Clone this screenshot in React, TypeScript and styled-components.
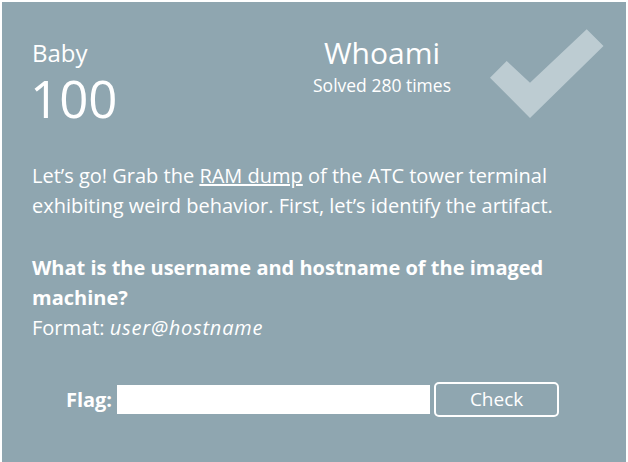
import React from "react";
import styled, { createGlobalStyle } from "styled-components";

const Global = createGlobalStyle`
  html, body { margin: 0; padding: 0; background: #ffffff; }
  body { font-family: "Open Sans", "Liberation Sans", sans-serif; }
  * { box-sizing: border-box; }
`;

const Card = styled.div`
  margin: 2px 2px 0 2px;
  height: 460px;
  background: #8fa6b0;
  color: #ffffff;
  padding: 36px 30px 0 30px;
  overflow: hidden;
`;

const Header = styled.div`
  display: grid;
  grid-template-columns: 250px 200px 1fr;
  align-items: start;
`;

const Category = styled.div`
  display: flex;
  flex-direction: column;
`;

const CategoryName = styled.div`
  font-size: 24px;
  line-height: 29px;
`;

const Points = styled.div`
  font-size: 51px;
  line-height: 50px;
  margin-top: 6px;
  margin-left: -2px;
`;

const TitleBlock = styled.div`
  display: flex;
  flex-direction: column;
  align-items: center;
  text-align: center;
`;

const Title = styled.div`
  font-size: 30px;
  line-height: 34px;
  margin-top: -2px;
`;

const Solves = styled.div`
  font-size: 17.5px;
  line-height: 24px;
  margin-top: 3px;
`;

const CheckWrap = styled.div`
  display: flex;
  justify-content: flex-end;
  margin-right: -8px;
  margin-top: -9px;
`;

const Description = styled.div`
  margin-top: 38px;
  font-size: 20px;
  line-height: 29.7px;
`;

const Para = styled.p<{ $gap?: boolean }>`
  margin: 0 0 ${(p) => (p.$gap ? "33px" : "0")} 0;
`;

const Link = styled.a`
  color: #ffffff;
  text-decoration: underline;
`;

const Example = styled.em`
  font-style: italic;
  letter-spacing: 0.8px;
`;

const FlagRow = styled.form`
  display: flex;
  align-items: center;
  justify-content: center;
  margin-top: 39px;
  padding-right: 3px;
  gap: 4px;
`;

const FlagLabel = styled.label`
  font-weight: 700;
  font-size: 20px;
  margin-right: 1px;
`;

const FlagInput = styled.input`
  width: 313px;
  height: 29px;
  border: none;
  outline: none;
  background: #ffffff;
  padding: 0 6px;
  font-family: inherit;
  font-size: 16px;
`;

const CheckButton = styled.button`
  width: 125px;
  height: 35px;
  border: 2px solid #ffffff;
  border-radius: 5px;
  background: transparent;
  color: #ffffff;
  font-family: inherit;
  font-size: 19px;
  cursor: pointer;
`;

export default function App() {
  return (
    <>
      <Global />
      <Card>
        <Header>
          <Category>
            <CategoryName>Baby</CategoryName>
            <Points>100</Points>
          </Category>
          <TitleBlock>
            <Title>Whoami</Title>
            <Solves>Solved 280 times</Solves>
          </TitleBlock>
          <CheckWrap>
            <svg width="114" height="90" viewBox="490 28 114 90" aria-hidden="true">
              <polygon
                points="506.7,60 530,81.7 586.7,28.3 603.5,45 530,117 490,76.7"
                fill="#bdccd2"
              />
            </svg>
          </CheckWrap>
        </Header>
        <Description>
          <Para $gap>
            Let’s go! Grab the <Link href="#">RAM dump</Link> of the ATC tower terminal exhibiting weird
            behavior. First, let’s identify the artifact.
          </Para>
          <Para>
            <strong>What is the username and hostname of the imaged machine?</strong>
          </Para>
          <Para>
            Format: <Example>user@hostname</Example>
          </Para>
        </Description>
        <FlagRow onSubmit={(e) => e.preventDefault()}>
          <FlagLabel htmlFor="flag">Flag:</FlagLabel>
          <FlagInput id="flag" type="text" />
          <CheckButton type="submit">Check</CheckButton>
        </FlagRow>
      </Card>
    </>
  );
}
